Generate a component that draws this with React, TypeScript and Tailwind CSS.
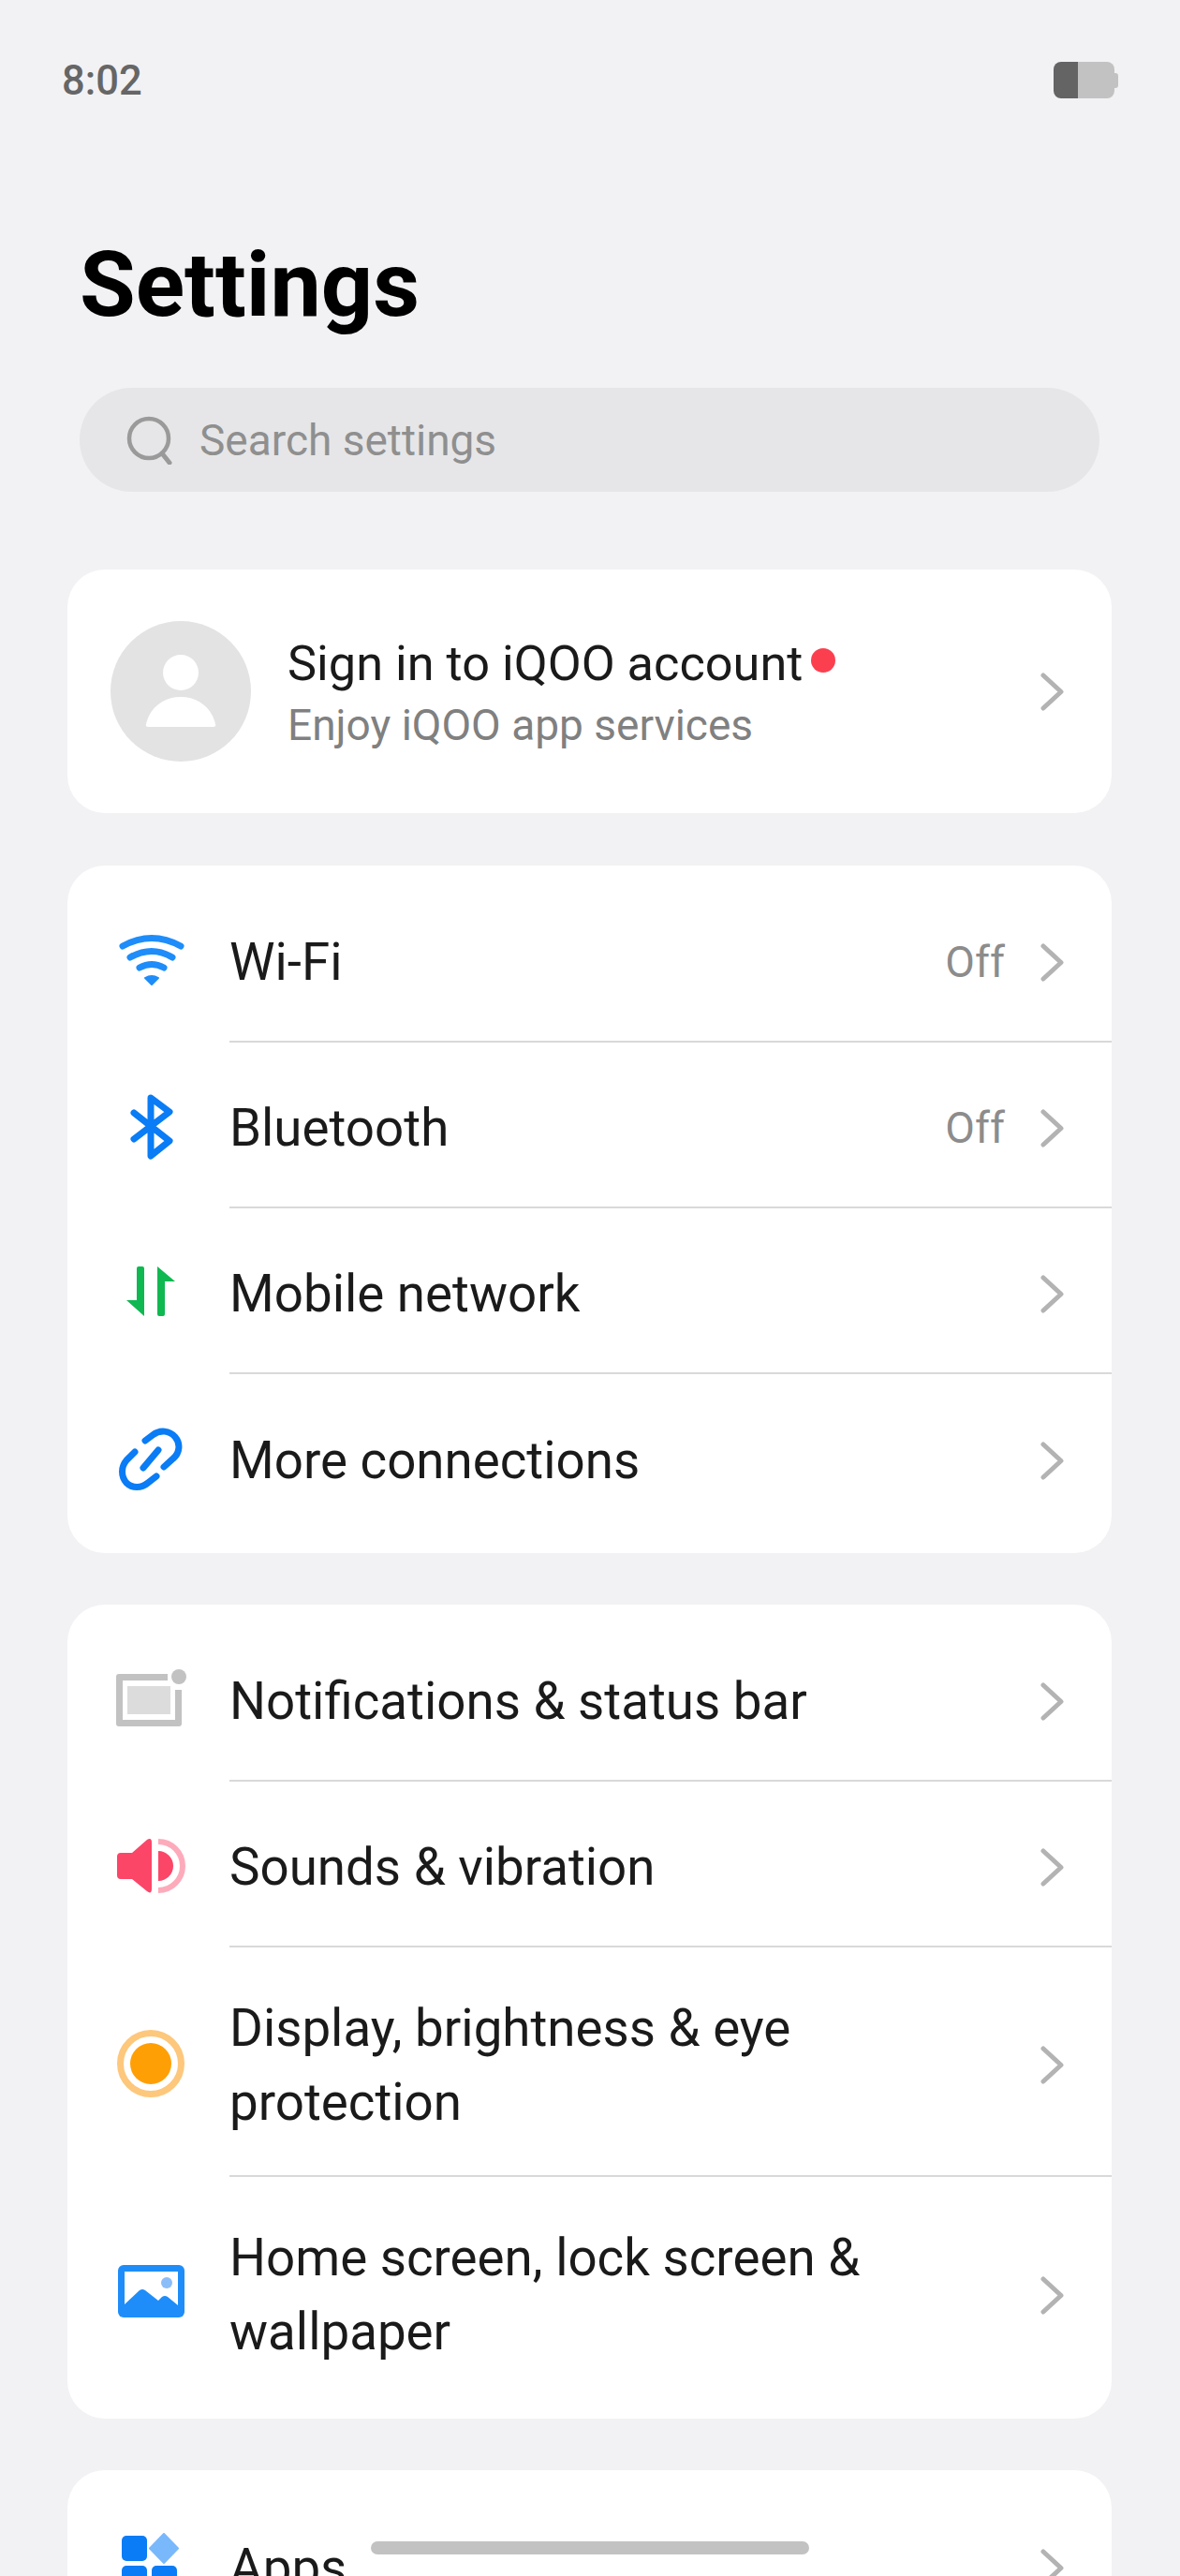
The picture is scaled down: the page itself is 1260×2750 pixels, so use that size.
import React from "react";

function Chevron() {
  return (
    <svg width="26" height="41" viewBox="0 0 26 41" className="shrink-0" fill="none">
      <path d="M3 3 L22 20.5 L3 38" stroke="#b3b3b3" strokeWidth="5" strokeLinecap="round" strokeLinejoin="round" />
    </svg>
  );
}

function Box({ children, viewBox = "0 0 72 72" }: { children: React.ReactNode; viewBox?: string }) {
  return (
    <svg width="72" height="72" viewBox={viewBox} fill="none" className="overflow-visible">
      {children}
    </svg>
  );
}

function WifiIcon() {
  return (
    <Box>
      <path d="M6 19 Q37 2 68 19" stroke="#1e8dfa" strokeWidth="7" strokeLinecap="round" />
      <path d="M14 31 Q37 18 59 31" stroke="#1e8dfa" strokeWidth="7" strokeLinecap="round" />
      <path d="M24 42 Q37 35 50 42" stroke="#1e8dfa" strokeWidth="7" strokeLinecap="round" />
      <path d="M30 53 Q37 49 44 53 L37 60 Z" fill="#1e8dfa" stroke="#1e8dfa" strokeWidth="2" strokeLinejoin="round" />
    </Box>
  );
}

function BluetoothIcon() {
  return (
    <Box>
      <path d="M18 20 L56 50 L36 66 V4 L56 19 L18 48" stroke="#0a7cf5" strokeWidth="7" strokeLinecap="round" strokeLinejoin="round" />
    </Box>
  );
}

function MobileIcon() {
  return (
    <Box>
      <path d="M21 9 Q21 7 23 7 H27 Q29 7 29 9 V60 L10 43 H21 Z" fill="#10b851" />
      <path d="M43 7 L62 23 H51 V58 Q51 60 49 60 H45 Q43 60 43 58 Z" fill="#10b851" />
    </Box>
  );
}

function LinkIcon() {
  return (
    <Box>
      <path d="M30 16 L38 10 C46 4 56 5 62 12 C68 19 67 29 60 35 L50 44" stroke="#0a7cf5" strokeWidth="7" strokeLinecap="round" />
      <path d="M44 26 L28 45" stroke="#0a7cf5" strokeWidth="7" strokeLinecap="round" />
      <path d="M19 28 L10 37 C4 44 4 54 10 61 C16 67 26 67 33 61 L42 54" stroke="#0a7cf5" strokeWidth="7" strokeLinecap="round" />
    </Box>
  );
}

function NotificationIcon() {
  return (
    <Box viewBox="1 0 72 72">
      <path d="M55 7 H3 Q0 7 0 10 V60 Q0 63 3 63 H67 Q70 63 70 60 V24 H63 V56 H7 V14 H55 Z" fill="#c2c2c2" />
      <rect x="12" y="20" width="46" height="30" fill="#dcdcdc" />
      <circle cx="67" cy="10" r="8" fill="#c2c2c2" />
    </Box>
  );
}

function SoundIcon() {
  return (
    <Box>
      <path d="M0 25 Q0 21 4 21 H16 L32 7 Q37 4 37 10 V59 Q37 66 32 62 L16 49 H4 Q0 49 0 45 Z" fill="#fb4668" />
      <path d="M44 19 A16 16 0 0 1 44 51 Z" fill="#fb4668" />
      <path d="M44 9 A26 26 0 0 1 44 61" stroke="#fdabbb" strokeWidth="6" />
    </Box>
  );
}

function SunIcon() {
  return (
    <Box>
      <circle cx="36" cy="35" r="32.5" stroke="#fdc77c" strokeWidth="7" />
      <circle cx="36" cy="35" r="22" fill="#ff9f06" />
    </Box>
  );
}

function WallpaperIcon() {
  return (
    <Box>
      <rect x="1" y="5" width="71" height="56" rx="6" fill="#1e8dfa" />
      <path d="M8 12 H65 V48 L54 39 Q51 37 48 39 L44 43 L30 32 Q27 30 24 32 L8 47 Z" fill="#ffffff" />
      <circle cx="53" cy="24" r="6" fill="#8bbdf8" />
    </Box>
  );
}

function AppsIcon() {
  return (
    <svg width="62" height="72" viewBox="0 0 62 72">
      <rect x="0" y="3" width="27" height="27" rx="5" fill="#0a7cf5" />
      <path d="M45 1 L60 16.5 L45 32 L30 16.5 Z" fill="#79b8fb" stroke="#79b8fb" strokeWidth="2" strokeLinejoin="round" />
      <rect x="0" y="35" width="27" height="27" rx="5" fill="#0a7cf5" />
      <rect x="32" y="35" width="27" height="27" rx="5" fill="#0a7cf5" />
    </svg>
  );
}

type RowProps = {
  icon: React.ReactNode;
  label: React.ReactNode;
  value?: string;
  height: string;
  last?: boolean;
};

function Row({ icon, label, value, height, last }: RowProps) {
  return (
    <div className={`flex items-stretch ${height}`}>
      <div className="flex w-[173px] shrink-0 items-center justify-center pl-[4px] pt-[5px]">{icon}</div>
      <div className={`flex min-w-0 flex-1 items-center pr-[50px] pt-[8px] ${last ? "" : "border-b-2 border-[#d9d9d9]"}`}>
        <div className="flex-1 pr-[60px] text-[54.7px] leading-[79px] text-[#1a1a1a]">{label}</div>
        {value ? <span className="mr-[38px] text-[46px] text-[#8c8c8c]">{value}</span> : null}
        <Chevron />
      </div>
    </div>
  );
}

export default function App() {
  return (
    <div className="relative h-[2750px] w-[1260px] overflow-hidden bg-[#f2f2f4] font-['Roboto',sans-serif]">
      <div className="flex h-[248px] items-start justify-between px-[66px] pt-[62px]">
        <span className="text-[43.5px] font-medium leading-[50px] text-[#666666]">8:02</span>
        <div className="mt-[4px] flex items-center">
          <div className="flex h-[39px] w-[65px] overflow-hidden rounded-[8px]">
            <div className="w-[26px] bg-[#646464]" />
            <div className="flex-1 bg-[#c2c2c2]" />
          </div>
          <div className="h-[16px] w-[4px] rounded-r-[3px] bg-[#c2c2c2]" />
        </div>
      </div>

      <h1 className="pl-[85px] text-[97px] font-bold leading-[112px] text-black">Settings</h1>

      <div className="ml-[85px] mr-[86px] mt-[54px] flex h-[111px] items-center rounded-full bg-[#e6e6e8] pl-[50px]">
        <svg width="50" height="52" viewBox="0 0 50 52" fill="none">
          <circle cx="24" cy="24" r="21" stroke="#9a9a9a" strokeWidth="4.5" />
          <path d="M38 40 L46 50" stroke="#9a9a9a" strokeWidth="5" strokeLinecap="round" />
        </svg>
        <span className="ml-[28px] mt-[2px] text-[46px] text-[#8f8f8f]">Search settings</span>
      </div>

      <div className="ml-[72px] mr-[73px] mt-[83px] flex flex-col gap-[55px]">
        <div className="mb-[1px] flex h-[260px] items-center rounded-[40px] bg-white pl-[46px] pr-[50px]">
          <div className="flex h-[150px] w-[150px] shrink-0 items-center justify-center rounded-full bg-[#e3e3e3]">
            <svg width="76" height="78" viewBox="0 0 76 78">
              <circle cx="38" cy="19" r="19" fill="#ffffff" />
              <path d="M3 77 Q0 77 1 74 C5 56 20 45 38 45 C56 45 71 56 75 74 Q76 77 73 77 Z" fill="#ffffff" />
            </svg>
          </div>
          <div className="ml-[39px] mt-[3px] flex-1">
            <div className="flex items-start">
              <span className="text-[52.3px] leading-[68px] text-[#1a1a1a]">Sign in to iQOO account</span>
              <span className="ml-[9px] mt-[18px] h-[26px] w-[26px] rounded-full bg-[#fb3f4f]" />
            </div>
            <div className="text-[46px] leading-[64px] text-[#808080]">Enjoy iQOO app services</div>
          </div>
          <Chevron />
        </div>

        <div className="rounded-[40px] bg-white pb-[14px] pt-[12px]">
          <Row icon={<WifiIcon />} label="Wi-Fi" value="Off" height="h-[177px]" />
          <Row icon={<BluetoothIcon />} label="Bluetooth" value="Off" height="h-[177px]" />
          <Row icon={<MobileIcon />} label="Mobile network" height="h-[177px]" />
          <Row icon={<LinkIcon />} label="More connections" height="h-[177px]" last />
        </div>

        <div className="rounded-[40px] bg-white pb-[14px] pt-[12px]">
          <Row icon={<NotificationIcon />} label="Notifications & status bar" height="h-[177px]" />
          <Row icon={<SoundIcon />} label="Sounds & vibration" height="h-[177px]" />
          <Row icon={<SunIcon />} label="Display, brightness & eye protection" height="h-[245px]" />
          <Row icon={<WallpaperIcon />} label="Home screen, lock screen & wallpaper" height="h-[244px]" last />
        </div>

        <div className="rounded-[40px] bg-white pt-[12px]">
          <Row icon={<AppsIcon />} label="Apps" height="h-[177px]" last />
        </div>
      </div>

      <div className="absolute left-[396px] top-[2713px] h-[14px] w-[468px] rounded-full bg-[#c2c2c2]" />
    </div>
  );
}
